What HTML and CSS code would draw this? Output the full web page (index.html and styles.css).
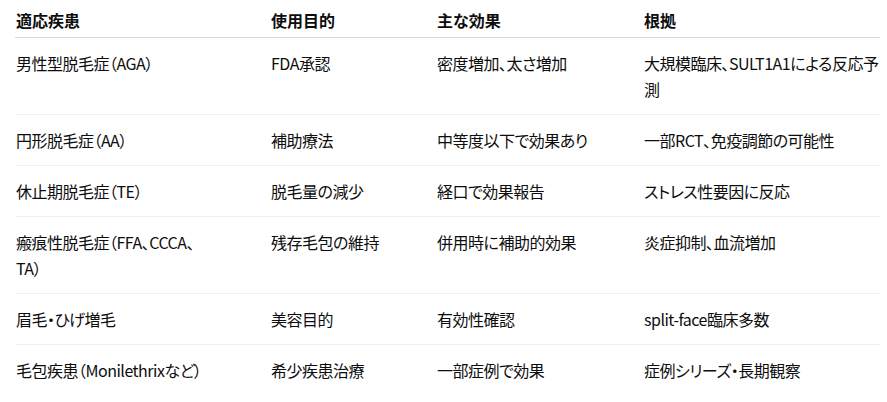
FILE: index.html
```html
<!DOCTYPE html>
<html lang="ja">
<head>
<meta charset="utf-8">
<link rel="stylesheet" href="styles.css">
</head>
<body>
<div class="wrap">
<table class="tbl">
<colgroup>
<col class="c1"><col class="c2"><col class="c3"><col class="c4">
</colgroup>
<thead>
<tr><th>適応疾患</th><th>使用目的</th><th>主な効果</th><th>根拠</th></tr>
</thead>
<tbody>
<tr><td>男性型脱毛症（AGA）</td><td>FDA承認</td><td>密度増加、太さ増加</td><td>大規模臨床、SULT1A1による反応予測</td></tr>
<tr><td>円形脱毛症（AA）</td><td>補助療法</td><td>中等度以下で効果あり</td><td>一部RCT、免疫調節の可能性</td></tr>
<tr><td>休止期脱毛症（TE）</td><td>脱毛量の減少</td><td>経口で効果報告</td><td>ストレス性要因に反応</td></tr>
<tr><td>瘢痕性脱毛症（FFA、CCCA、TA）</td><td>残存毛包の維持</td><td>併用時に補助的効果</td><td>炎症抑制、血流増加</td></tr>
<tr><td>眉毛・ひげ増毛</td><td>美容目的</td><td>有効性確認</td><td>split-face臨床多数</td></tr>
<tr><td>毛包疾患（Monilethrixなど）</td><td>希少疾患治療</td><td>一部症例で効果</td><td>症例シリーズ・長期観察</td></tr>
</tbody>
</table>
</div>
</body>
</html>
```
FILE: styles.css
```css
html, body {
  margin: 0;
  padding: 0;
  background: #ffffff;
}
body {
  font-family: "Noto Sans CJK JP", "Noto Sans", sans-serif;
  font-size: 16px;
  line-height: 26px;
  color: #0d0d0d;
  font-feature-settings: "palt";
}
.wrap {
  padding: 0 6px 0 15px;
}
.tbl {
  width: 865px;
  border-collapse: collapse;
  table-layout: fixed;
}
.c1 { width: 255px; }
.c2 { width: 166px; }
.c3 { width: 207px; }
.c4 { width: 237px; }
.tbl th {
  text-align: left;
  font-weight: 700;
  padding: 7px 20px 4px 1px;
  border-bottom: 1px solid #d9d9d9;
  vertical-align: top;
}
.tbl td {
  padding: 12px 20px 12px 1px;
  border-bottom: 1px solid #efefef;
  vertical-align: top;
  letter-spacing: -0.5px;
}
.tbl td:first-child {
  padding-right: 61px;
}
.tbl td:last-child {
  padding-right: 0;
}
.tbl tbody tr:last-child td {
  border-bottom: none;
}
```
